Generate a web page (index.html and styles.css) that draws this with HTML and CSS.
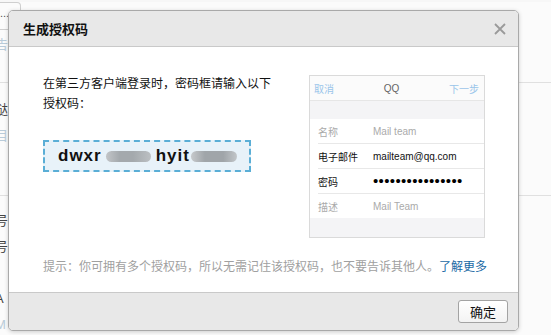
FILE: index.html
```html
<!DOCTYPE html>
<html lang="zh-CN">
<head>
    <meta charset="UTF-8">
    <title>生成授权码</title>
    <link rel="stylesheet" href="styles.css">
</head>
<body>
    <div class="page">
        <div class="section sec1">
            <div class="tab">...</div>
            <div class="frag frag-light">告</div>
        </div>
        <div class="section sec2">
            <div class="frag">垯</div>
            <div class="frag frag-light">目</div>
            <div class="frag frag-bold">(</div>
        </div>
        <div class="section sec3">
            <div class="frag">号</div>
            <div class="frag">号</div>
            <div class="frag">(</div>
            <div class="frag">A</div>
            <div class="frag frag-light">M</div>
        </div>
        <div class="notice"></div>
    </div>

    <div class="dialog">
        <div class="dialog-header">
            <span class="dialog-title">生成授权码</span>
            <svg class="close" width="12" height="12" viewBox="0 0 12 12">
                <path d="M1 1 L11 11 M11 1 L1 11" stroke="#9a9a9a" stroke-width="1.8" fill="none"/>
            </svg>
        </div>
        <div class="dialog-body">
            <div class="columns">
                <div class="left">
                    <p class="intro">在第三方客户端登录时，密码框请输入以下授权码：</p>
                    <div class="code-box">
                        <span class="code">dwxr</span><span class="blur blur-1"></span><span class="code">hyit</span><span class="blur blur-2"></span>
                    </div>
                </div>
                <div class="phone">
                    <div class="phone-head">
                        <span class="link-light">取消</span>
                        <span class="phone-title">QQ</span>
                        <span class="link-light">下一步</span>
                    </div>
                    <div class="phone-gap"></div>
                    <div class="phone-rows">
                        <div class="prow muted"><span class="plabel">名称</span><span>Mail team</span></div>
                        <div class="prow"><span class="plabel">电子邮件</span><span>mailteam@qq.com</span></div>
                        <div class="prow"><span class="plabel">密码</span><span class="dots">••••••••••••••••</span></div>
                        <div class="prow muted"><span class="plabel">描述</span><span>Mail Team</span></div>
                    </div>
                </div>
            </div>
            <p class="tip">提示：你可拥有多个授权码，所以无需记住该授权码，也不要告诉其他人。<a href="#" class="more">了解更多</a></p>
        </div>
        <div class="dialog-footer">
            <button class="btn">确定</button>
        </div>
    </div>
</body>
</html>
```

FILE: styles.css
```css
body {
    margin: 0;
    padding: 0;
    font-family: "Liberation Sans", "Noto Sans CJK SC", sans-serif;
    font-size: 12px;
    color: #222;
    background-color: #f7f7f7;
    overflow: hidden;
}
.page {
    width: 551px;
    height: 335px;
    position: relative;
}
.section {
    border-bottom: 1px solid #e0e0e0;
    box-sizing: border-box;
    padding-left: 0;
}
.sec1 {
    height: 81px;
    background-color: #fbfbfb;
}
.sec2 {
    height: 113px;
    background-color: #fbfbfb;
    padding-top: 14px;
}
.sec3 {
    height: 139px;
    border-bottom: none;
    background-color: #fbfbfb;
    padding-top: 12px;
}
.tab {
    width: 20px;
    height: 26px;
    margin-top: 2px;
    border: 1px solid #cfcfcf;
    border-left: none;
    border-radius: 0 4px 0 0;
    color: #555;
    line-height: 20px;
    font-size: 11px;
}
.frag {
    margin-left: -5px;
    font-size: 13px;
    line-height: 26px;
    color: #444;
}
.sec1 .frag {
    margin-top: 2px;
}
.frag-light {
    color: #b9cbd9;
}
.frag-bold {
    font-weight: bold;
    margin-top: 20px;
}
.notice {
    height: 2px;
    width: 368px;
    background-color: #fbefc2;
}

/* dialog */
.dialog {
    position: absolute;
    left: 8px;
    top: 10px;
    width: 511px;
    height: 321px;
    box-sizing: border-box;
    border: 1px solid #a9a9a9;
    border-radius: 5px;
    background-color: #fff;
    box-shadow: 0 1px 4px rgba(0, 0, 0, 0.18);
    display: flex;
    flex-direction: column;
    overflow: hidden;
}
.dialog-header {
    height: 36px;
    box-sizing: border-box;
    background-color: #e8e8e8;
    border-bottom: 1px solid #c9c9c9;
    display: flex;
    align-items: center;
    justify-content: space-between;
    padding: 0 12px 0 14px;
}
.dialog-title {
    font-size: 13px;
    font-weight: bold;
    color: #111;
}
.dialog-body {
    flex: 1;
    padding: 27px 33px 0 34px;
}
.columns {
    display: flex;
    justify-content: space-between;
}
.left {
    width: 236px;
}
.intro {
    margin: 0;
    line-height: 20px;
    color: #111;
}
.code-box {
    margin-top: 26px;
    width: 208px;
    height: 32px;
    box-sizing: border-box;
    border: 2px dashed #5aaed6;
    background-color: #e8f2f9;
    display: flex;
    align-items: center;
    padding-left: 13px;
}
.code {
    font-size: 17px;
    font-weight: bold;
    letter-spacing: 1px;
    color: #111;
}
.blur {
    display: inline-block;
    height: 11px;
    border-radius: 6px;
    filter: blur(0.6px);
}
.blur-1 {
    width: 45px;
    margin: 1px 5px 0 4px;
    background: linear-gradient(to right, #c2c5c8, #a4a9ad 30%, #a4a9ad 60%, #bcc0c3);
}
.blur-2 {
    width: 46px;
    margin: 1px 0 0 1px;
    background: linear-gradient(to right, #c6c9cc, #a0a5a9 30%, #a0a5a9 70%, #c2c6c9);
}
.phone {
    margin-top: 1px;
    width: 176px;
    height: 163px;
    box-sizing: border-box;
    border: 1px solid #dadada;
    background-color: #f4f4f6;
    font-size: 10px;
}
.phone-head {
    height: 25px;
    box-sizing: border-box;
    background-color: #fbfbfb;
    border-bottom: 1px solid #e6e6e6;
    display: flex;
    align-items: center;
    justify-content: space-between;
    padding: 0 5px 0 4px;
}
.link-light {
    color: #9ac5ea;
}
.phone-title {
    color: #666;
}
.phone-gap {
    height: 18px;
}
.phone-rows {
    background-color: #fff;
    padding-left: 8px;
}
.prow {
    height: 25px;
    box-sizing: border-box;
    border-bottom: 1px solid #e8e8e8;
    display: flex;
    align-items: center;
    color: #111;
}
.prow:last-child {
    border-bottom: none;
    height: 24px;
}
.prow.muted {
    color: #aaa;
}
.plabel {
    width: 55px;
}
.dots {
    font-size: 15px;
    letter-spacing: 0.35px;
    line-height: 10px;
    color: #000;
}
.tip {
    margin: 19px 0 0 0;
    line-height: 20px;
    color: #a0a0a0;
    white-space: nowrap;
}
.more {
    color: #1b6aa5;
    text-decoration: none;
}
.dialog-footer {
    height: 38px;
    box-sizing: border-box;
    background-color: #e8e8e8;
    border-top: 1px solid #c9c9c9;
    display: flex;
    justify-content: flex-end;
    padding: 7px 10px 0 0;
}
.btn {
    width: 50px;
    height: 23px;
    border: 1px solid #a3a3a3;
    border-radius: 3px;
    background: linear-gradient(#ffffff, #f3f3f3);
    font-family: "Liberation Sans", "Noto Sans CJK SC", sans-serif;
    font-size: 13px;
    color: #111;
    padding: 0;
    cursor: pointer;
}
```
